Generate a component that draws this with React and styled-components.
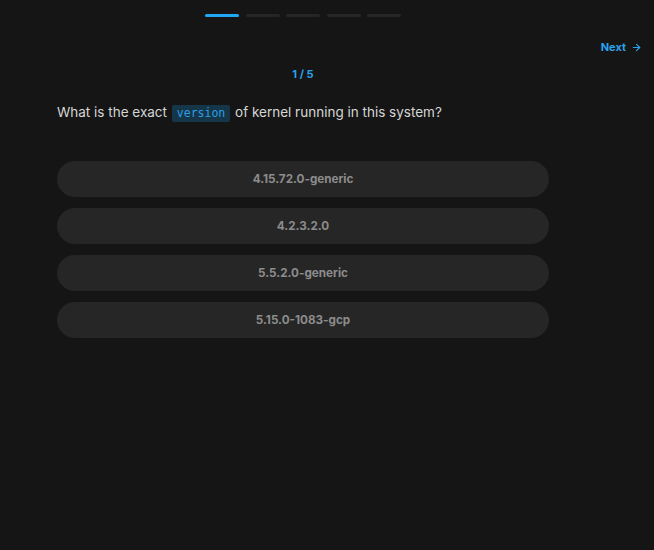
import React from "react";
import styled, { createGlobalStyle } from "styled-components";

const GlobalStyle = createGlobalStyle`
  html, body {
    margin: 0;
    padding: 0;
    background: #151515;
  }
  body {
    font-family: Inter, "Noto Sans", sans-serif;
  }
`;

const questions = [
  {
    answers: ["4.15.72.0-generic", "4.2.3.2.0", "5.5.2.0-generic", "5.15.0-1083-gcp"],
  },
];

const App = () => {
  const total = 5;
  const current = 0;
  const q = questions[0];

  return (
    <Page>
      <GlobalStyle />
      <Column>
        <Progress>
          {Array.from({ length: total }).map((_, i) => (
            <Step key={i} $active={i === current} />
          ))}
        </Progress>
        <TopBar>
          <NextButton>
            Next
            <svg width="11" height="11" viewBox="0 0 24 24" fill="none" stroke="currentColor" strokeWidth="2.4" strokeLinecap="round" strokeLinejoin="round">
              <path d="M5 12h14" />
              <path d="M12 5l7 7-7 7" />
            </svg>
          </NextButton>
        </TopBar>
        <Counter>
          {current + 1} / {total}
        </Counter>
        <Question>
          What is the exact <Code>version</Code> of kernel running in this system?
        </Question>
        <Answers>
          {q.answers.map((a) => (
            <Answer key={a}>{a}</Answer>
          ))}
        </Answers>
      </Column>
    </Page>
  );
};

export default App;

const Page = styled.div`
  width: 654px;
  height: 550px;
  background: #151515;
  box-sizing: border-box;
  padding: 14px 12px 0 57px;
`;

const Column = styled.div`
  width: 585px;
  display: flex;
  flex-direction: column;
`;

const Progress = styled.div`
  width: 492px;
  display: flex;
  justify-content: center;
  gap: 6.5px;
`;

const Step = styled.div`
  width: 34px;
  height: 3px;
  border-radius: 2px;
  background: ${({ $active }) => ($active ? "#21a7f3" : "#262626")};
`;

const TopBar = styled.div`
  display: flex;
  justify-content: flex-end;
  margin-top: 23px;
`;

const NextButton = styled.button`
  display: flex;
  align-items: center;
  gap: 5px;
  background: none;
  border: none;
  padding: 0;
  color: #2aa2ec;
  font-family: Inter, sans-serif;
  font-size: 11px;
  font-weight: 700;
  cursor: pointer;
  line-height: 14px;
`;

const Counter = styled.div`
  width: 492px;
  text-align: center;
  color: #2aa2ec;
  font-size: 11px;
  font-weight: 700;
  margin-top: 13px;
  line-height: 14px;
`;

const Question = styled.p`
  margin: 21px 0 0;
  color: #d6d6d6;
  font-size: 13.5px;
  line-height: 20px;
`;

const Code = styled.code`
  font-family: "DejaVu Sans Mono", "Liberation Mono", monospace;
  font-size: 11.5px;
  color: #2d9fe2;
  background: #153549;
  padding: 1px 5px 2px;
  border-radius: 2px;
  margin: 0 1px;
`;

const Answers = styled.div`
  width: 492px;
  display: flex;
  flex-direction: column;
  gap: 11px;
  margin-top: 38px;
`;

const Answer = styled.button`
  height: 36px;
  border: none;
  border-radius: 18px;
  background: #262626;
  color: #8c8c8c;
  font-family: Inter, sans-serif;
  font-size: 11.7px;
  font-weight: 700;
  cursor: pointer;
`;
